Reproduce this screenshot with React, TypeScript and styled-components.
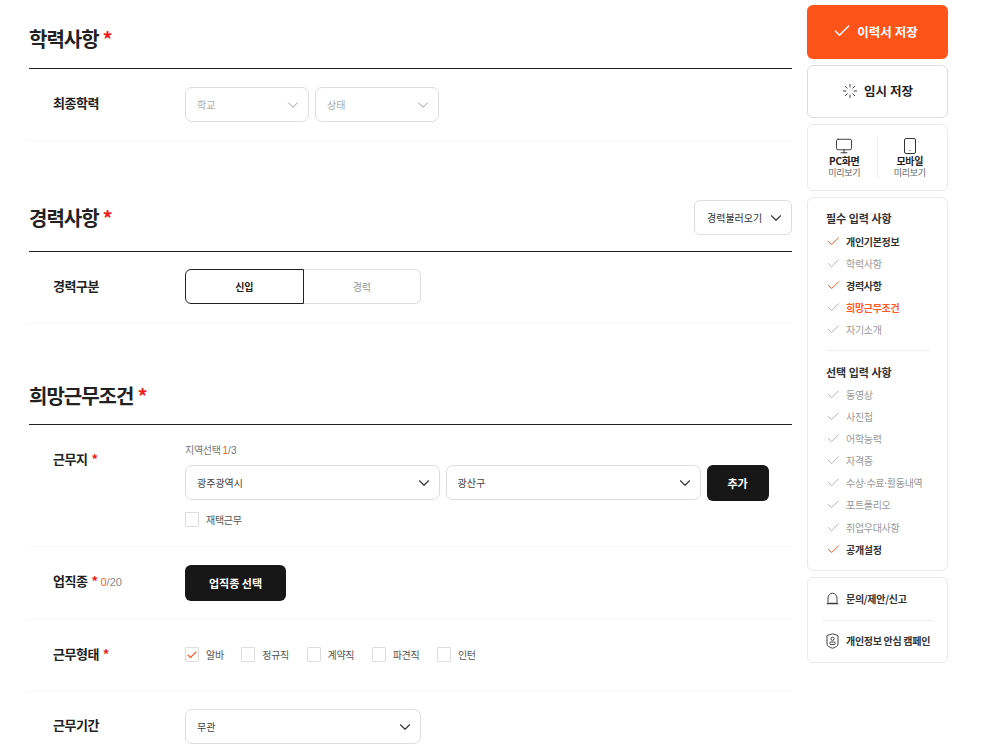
import React from 'react';
import styled, { createGlobalStyle } from 'styled-components';
import { Check, ChevronDown, Loader, Monitor } from 'lucide-react';

const GlobalStyle = createGlobalStyle`
  html, body {
    margin: 0;
    height: 750px;
    overflow: hidden;
    background: #fff;
  }
  body {
    font-family: 'Noto Sans CJK KR', 'Noto Sans', sans-serif;
    color: #222;
    letter-spacing: -0.3px;
  }
  * {
    box-sizing: border-box;
  }
`;

const Page = styled.div`
  display: flex;
  align-items: flex-start;
  gap: 15px;
  padding: 0 0 0 29px;
`;

const Main = styled.main`
  width: 763px;
  flex-shrink: 0;
`;

const Section = styled.section<{ $top: number }>`
  margin-top: ${props => props.$top}px;
`;

const SectionHeader = styled.header<{ $gap: number }>`
  display: flex;
  align-items: center;
  justify-content: space-between;
  padding-bottom: ${props => props.$gap}px;
  border-bottom: 1px solid #222;
`;

const SectionTitle = styled.h2`
  margin: 0;
  font-size: 20px;
  line-height: 30px;
  font-weight: 700;
  letter-spacing: -1px;
  color: #222;
`;

const Star = styled.span<{ $size?: number }>`
  color: #f21a1a;
  font-weight: 700;
  font-size: ${props => props.$size || 13}px;
  margin-left: 4px;
`;

const LoadButton = styled.button`
  display: flex;
  align-items: center;
  justify-content: space-between;
  width: 98px;
  height: 35px;
  padding: 0 6px 0 12px;
  background: #fff;
  border: 1px solid #ddd;
  border-radius: 6px;
  font-family: inherit;
  font-size: 10px;
  color: #333;
`;

const Row = styled.div<{ $height: number; $align?: string }>`
  display: flex;
  align-items: ${props => props.$align || 'center'};
  min-height: ${props => props.$height}px;
  padding-left: 24px;
  border-bottom: 1px solid #f5f5f5;
`;

const RowLabel = styled.div<{ $top?: number }>`
  width: 132px;
  flex-shrink: 0;
  font-size: 13px;
  font-weight: 700;
  line-height: 20px;
  letter-spacing: -0.5px;
  color: #222;
  padding-top: ${props => props.$top || 0}px;
  padding-bottom: 3px;
`;

const Count = styled.span`
  font-family: 'Liberation Sans', sans-serif;
  font-size: 11px;
  font-weight: 400;
  letter-spacing: 0;
  color: #888;
  margin-left: 3px;
`;

const Accent = styled.span`
  color: #ff5a26;
`;

const Controls = styled.div`
  display: flex;
  gap: 6px;
`;

const SelectBox = styled.div<{ $width: number; $muted?: boolean }>`
  display: flex;
  align-items: center;
  justify-content: space-between;
  width: ${props => props.$width}px;
  height: 35px;
  padding: 0 6px 0 11px;
  background: #fff;
  border: 1px solid #ddd;
  border-radius: 7px;
  font-size: 10px;
  letter-spacing: 0;
  color: ${props => (props.$muted ? '#aaa' : '#444')};
  svg {
    color: ${props => (props.$muted ? '#999' : '#333')};
  }
`;

const Toggle = styled.div`
  display: flex;
  width: 236px;
  height: 35px;
  margin-bottom: 2px;
`;

const ToggleItem = styled.div<{ $active?: boolean }>`
  flex: 1;
  display: flex;
  align-items: center;
  justify-content: center;
  font-size: 10px;
  font-weight: ${props => (props.$active ? 700 : 400)};
  color: ${props => (props.$active ? '#222' : '#999')};
  border: 1px solid ${props => (props.$active ? '#222' : '#ddd')};
  border-left-width: ${props => (props.$active ? 1 : 0)}px;
  border-radius: ${props => (props.$active ? '6px 0 0 6px' : '0 6px 6px 0')};
`;

const PlaceColumn = styled.div`
  padding-top: 17px;
`;

const PlaceHint = styled.div`
  height: 15px;
  margin-bottom: 8px;
  font-size: 10px;
  line-height: 15px;
  color: #777;
`;

const HintNumber = styled.span`
  font-family: 'Liberation Sans', sans-serif;
  letter-spacing: 0;
`;

const BlackButton = styled.button<{ $width: number }>`
  width: ${props => props.$width}px;
  height: 36px;
  background: #171717;
  color: #fff;
  border: 0;
  border-radius: 6px;
  font-family: inherit;
  font-size: 11px;
  font-weight: 700;
`;

const CheckRow = styled.div<{ $top?: number }>`
  display: flex;
  align-items: center;
  gap: 17.5px;
  margin-top: ${props => props.$top || 0}px;
  margin-bottom: ${props => (props.$top ? 0 : 2)}px;
`;

const CheckItem = styled.label`
  display: flex;
  align-items: center;
  gap: 7px;
  font-size: 10px;
  color: #555;
`;

const CheckSquare = styled.span`
  display: flex;
  align-items: center;
  justify-content: center;
  width: 14px;
  height: 15px;
  background: #fff;
  border: 1px solid #ddd;
  border-radius: 1px;
  color: #ff5a26;
`;

const Sidebar = styled.aside`
  display: flex;
  flex-direction: column;
  width: 141px;
  flex-shrink: 0;
  padding-top: 5px;
`;

const SaveButton = styled.button<{ $primary?: boolean }>`
  display: flex;
  align-items: center;
  justify-content: center;
  gap: ${props => (props.$primary ? 5 : 6)}px;
  width: 100%;
  height: ${props => (props.$primary ? 54 : 53)}px;
  margin-bottom: 6px;
  padding: 0 ${props => (props.$primary ? 5 : 0)}px 2px 0;
  background: ${props => (props.$primary ? '#ff5419' : '#fff')};
  color: ${props => (props.$primary ? '#fff' : '#222')};
  border: ${props => (props.$primary ? '0' : '1px solid #ddd')};
  border-radius: 6px;
  font-family: inherit;
  font-size: 12.5px;
  font-weight: 700;
`;

const Card = styled.div`
  background: #fff;
  border: 1px solid #eaeaea;
  border-radius: 6px;
  margin-bottom: 6px;
`;

const PreviewCard = styled(Card)`
  display: flex;
  align-items: center;
  height: 67px;
  padding: 0 5px 0 4px;
`;

const PreviewItem = styled.div<{ $divided?: boolean }>`
  flex: 1;
  display: flex;
  flex-direction: column;
  align-items: center;
  height: 41px;
  border-left: ${props => (props.$divided ? '1px solid #eee' : '0')};
  color: #333;
`;

const PreviewName = styled.div`
  font-size: 10px;
  font-weight: 700;
  line-height: 12px;
  color: #222;
`;

const PreviewSub = styled.div`
  font-size: 9px;
  line-height: 11px;
  color: #666;
`;

const ChecklistCard = styled(Card)`
  height: 374px;
  padding: 11px 18px 0;
`;

const ListTitle = styled.div<{ $gap: number }>`
  font-size: 11px;
  font-weight: 700;
  line-height: 18px;
  letter-spacing: 0;
  margin-bottom: ${props => props.$gap}px;
  color: #333;
`;

const ListItem = styled.div<{ $tone: 'done' | 'idle' | 'current' }>`
  display: flex;
  align-items: center;
  gap: 5px;
  height: 22.2px;
  font-size: 10px;
  font-weight: ${props => (props.$tone === 'idle' ? 400 : 700)};
  white-space: nowrap;
  color: ${props =>
    props.$tone === 'idle' ? '#999' : props.$tone === 'current' ? '#ff5a26' : '#333'};
  svg {
    flex-shrink: 0;
    color: ${props => (props.$tone === 'done' ? '#ff5a26' : '#b4b4b4')};
  }
`;

const NameDot = styled.span`
  letter-spacing: 0;
  margin: 0 -1.5px;
`;

const ListDivider = styled.hr`
  margin: 9px 0 12px;
  border: 0;
  border-top: 1px solid #eee;
`;

const HelpCard = styled(Card)`
  height: 86px;
  padding: 0 14px;
  margin: 0;
`;

const HelpRow = styled.div<{ $divided?: boolean }>`
  display: flex;
  align-items: center;
  gap: 7px;
  height: 42px;
  padding: 0 0 2px 4px;
  font-size: 10px;
  font-weight: 700;
  white-space: nowrap;
  color: #333;
  border-top: ${props => (props.$divided ? '1px solid #eee' : '0')};
  svg {
    flex-shrink: 0;
  }
`;

const PhoneIcon = () => (
  <svg width="14" height="18" viewBox="0 0 14 18" fill="none" stroke="#333" strokeWidth="1">
    <rect x="1.5" y="1.5" width="11" height="15" rx="1.5" />
    <circle cx="7" cy="13.5" r="0.6" fill="#333" stroke="none" />
  </svg>
);

const BellIcon = () => (
  <svg width="13" height="13" viewBox="0 0 13 13" fill="none" stroke="#444" strokeWidth="1">
    <path d="M2 10.5 V6 a4.5 4.8 0 0 1 9 0 V10.5" />
    <path d="M0.8 11.5 H12.2" strokeWidth="1.6" />
  </svg>
);

const ShieldIcon = () => (
  <svg width="13" height="16" viewBox="0 0 13 16" fill="none" stroke="#444" strokeWidth="1">
    <path d="M1 2.5 L6.5 0.8 L12 2.5 V11 C12 13 9 14.6 6.5 15.2 C4 14.6 1 13 1 11 Z" />
    <circle cx="6.5" cy="5.8" r="1.6" />
    <rect x="3.8" y="9" width="5.4" height="2.6" rx="1.2" />
  </svg>
);

const required = [
  { id: 'basic', name: '개인기본정보', tone: 'done' },
  { id: 'school', name: '학력사항', tone: 'idle' },
  { id: 'career', name: '경력사항', tone: 'done' },
  { id: 'hope', name: '희망근무조건', tone: 'current' },
  { id: 'intro', name: '자기소개', tone: 'idle' },
] as const;

const optional = [
  { id: 'video', name: '동영상', tone: 'idle' },
  { id: 'photo', name: '사진첩', tone: 'idle' },
  { id: 'lang', name: '어학능력', tone: 'idle' },
  { id: 'cert', name: '자격증', tone: 'idle' },
  {
    id: 'award',
    name: <span>수상<NameDot>·</NameDot>수료<NameDot>·</NameDot>활동내역</span>,
    tone: 'idle',
  },
  { id: 'folio', name: '포트폴리오', tone: 'idle' },
  { id: 'perk', name: '취업우대사항', tone: 'idle' },
  { id: 'open', name: '공개설정', tone: 'done' },
] as const;

const workTypes = ['알바', '정규직', '계약직', '파견직', '인턴'];

const App: React.FC = () => {
  return (
    <Page>
      <GlobalStyle />
      <Main>
        <Section $top={24}>
          <SectionHeader $gap={14}>
            <SectionTitle>학력사항<Star $size={20}>*</Star></SectionTitle>
          </SectionHeader>
          <Row $height={72}>
            <RowLabel>최종학력</RowLabel>
            <Controls>
              <SelectBox $width={124} $muted>학교<ChevronDown size={18} strokeWidth={1.25} /></SelectBox>
              <SelectBox $width={124} $muted>상태<ChevronDown size={18} strokeWidth={1.25} /></SelectBox>
            </Controls>
          </Row>
        </Section>

        <Section $top={59}>
          <SectionHeader $gap={16}>
            <SectionTitle>경력사항<Star $size={20}>*</Star></SectionTitle>
            <LoadButton>경력불러오기<ChevronDown size={18} strokeWidth={1.5} /></LoadButton>
          </SectionHeader>
          <Row $height={72}>
            <RowLabel>경력구분</RowLabel>
            <Toggle>
              <ToggleItem $active>신입</ToggleItem>
              <ToggleItem>경력</ToggleItem>
            </Toggle>
          </Row>
        </Section>

        <Section $top={57}>
          <SectionHeader $gap={13}>
            <SectionTitle>희망근무조건<Star $size={20}>*</Star></SectionTitle>
          </SectionHeader>
          <Row $height={122} $align="flex-start">
            <RowLabel $top={24}>근무지<Star>*</Star></RowLabel>
            <PlaceColumn>
              <PlaceHint>지역선택 <HintNumber><Accent>1</Accent>/3</HintNumber></PlaceHint>
              <Controls>
                <SelectBox $width={254.5}>광주광역시<ChevronDown size={18} strokeWidth={1.5} /></SelectBox>
                <SelectBox $width={255}>광산구<ChevronDown size={18} strokeWidth={1.5} /></SelectBox>
                <BlackButton $width={62}>추가</BlackButton>
              </Controls>
              <CheckRow $top={11}>
                <CheckItem><CheckSquare />재택근무</CheckItem>
              </CheckRow>
            </PlaceColumn>
          </Row>
          <Row $height={73}>
            <RowLabel>업직종<Star>*</Star><Count><Accent>0</Accent>/20</Count></RowLabel>
            <BlackButton $width={101}>업직종 선택</BlackButton>
          </Row>
          <Row $height={72}>
            <RowLabel>근무형태<Star>*</Star></RowLabel>
            <CheckRow>
              {workTypes.map((type, index) => (
                <CheckItem key={type}>
                  <CheckSquare>
                    {index === 0 && <Check size={12} strokeWidth={2.25} />}
                  </CheckSquare>
                  {type}
                </CheckItem>
              ))}
            </CheckRow>
          </Row>
          <Row $height={70}>
            <RowLabel>근무기간</RowLabel>
            <SelectBox $width={236}>무관<ChevronDown size={18} strokeWidth={1.5} /></SelectBox>
          </Row>
        </Section>
      </Main>

      <Sidebar>
        <SaveButton $primary><Check size={20} strokeWidth={1.75} />이력서 저장</SaveButton>
        <SaveButton><Loader size={16} strokeWidth={1.25} />임시 저장</SaveButton>
        <PreviewCard>
          <PreviewItem>
            <Monitor size={18} strokeWidth={1.25} />
            <PreviewName>PC화면</PreviewName>
            <PreviewSub>미리보기</PreviewSub>
          </PreviewItem>
          <PreviewItem $divided>
            <PhoneIcon />
            <PreviewName>모바일</PreviewName>
            <PreviewSub>미리보기</PreviewSub>
          </PreviewItem>
        </PreviewCard>
        <ChecklistCard>
          <ListTitle $gap={3}>필수 입력 사항</ListTitle>
          {required.map(item => (
            <ListItem key={item.id} $tone={item.tone}>
              <Check size={15} strokeWidth={1.6} />{item.name}
            </ListItem>
          ))}
          <ListDivider />
          <ListTitle $gap={2}>선택 입력 사항</ListTitle>
          {optional.map(item => (
            <ListItem key={item.id} $tone={item.tone}>
              <Check size={15} strokeWidth={1.6} />{item.name}
            </ListItem>
          ))}
        </ChecklistCard>
        <HelpCard>
          <HelpRow><BellIcon />문의/제안/신고</HelpRow>
          <HelpRow $divided><ShieldIcon />개인정보 안심 캠페인</HelpRow>
        </HelpCard>
      </Sidebar>
    </Page>
  );
};

export default App;
